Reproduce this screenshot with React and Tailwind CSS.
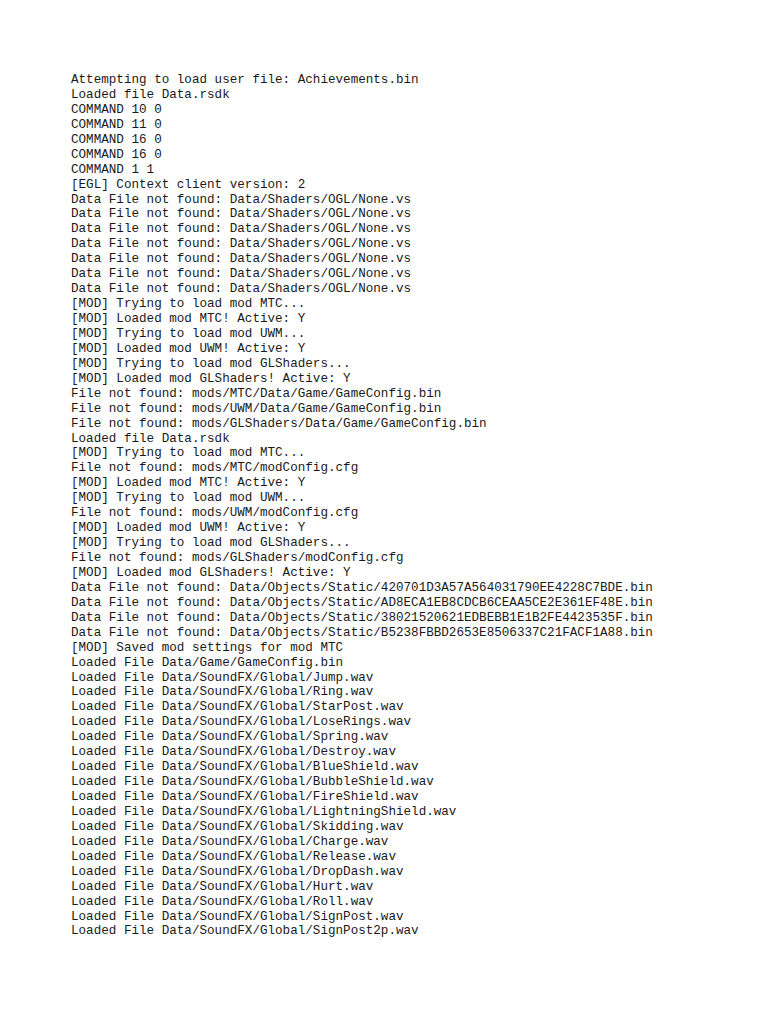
const logLines = [
  "Attempting to load user file: Achievements.bin",
  "Loaded file Data.rsdk",
  "COMMAND 10 0",
  "COMMAND 11 0",
  "COMMAND 16 0",
  "COMMAND 16 0",
  "COMMAND 1 1",
  "[EGL] Context client version: 2",
  "Data File not found: Data/Shaders/OGL/None.vs",
  "Data File not found: Data/Shaders/OGL/None.vs",
  "Data File not found: Data/Shaders/OGL/None.vs",
  "Data File not found: Data/Shaders/OGL/None.vs",
  "Data File not found: Data/Shaders/OGL/None.vs",
  "Data File not found: Data/Shaders/OGL/None.vs",
  "Data File not found: Data/Shaders/OGL/None.vs",
  "[MOD] Trying to load mod MTC...",
  "[MOD] Loaded mod MTC! Active: Y",
  "[MOD] Trying to load mod UWM...",
  "[MOD] Loaded mod UWM! Active: Y",
  "[MOD] Trying to load mod GLShaders...",
  "[MOD] Loaded mod GLShaders! Active: Y",
  "File not found: mods/MTC/Data/Game/GameConfig.bin",
  "File not found: mods/UWM/Data/Game/GameConfig.bin",
  "File not found: mods/GLShaders/Data/Game/GameConfig.bin",
  "Loaded file Data.rsdk",
  "[MOD] Trying to load mod MTC...",
  "File not found: mods/MTC/modConfig.cfg",
  "[MOD] Loaded mod MTC! Active: Y",
  "[MOD] Trying to load mod UWM...",
  "File not found: mods/UWM/modConfig.cfg",
  "[MOD] Loaded mod UWM! Active: Y",
  "[MOD] Trying to load mod GLShaders...",
  "File not found: mods/GLShaders/modConfig.cfg",
  "[MOD] Loaded mod GLShaders! Active: Y",
  "Data File not found: Data/Objects/Static/420701D3A57A564031790EE4228C7BDE.bin",
  "Data File not found: Data/Objects/Static/AD8ECA1EB8CDCB6CEAA5CE2E361EF48E.bin",
  "Data File not found: Data/Objects/Static/38021520621EDBEBB1E1B2FE4423535F.bin",
  "Data File not found: Data/Objects/Static/B5238FBBD2653E8506337C21FACF1A88.bin",
  "[MOD] Saved mod settings for mod MTC",
  "Loaded File Data/Game/GameConfig.bin",
];

const sounds = [
  "Jump", "Ring", "StarPost", "LoseRings", "Spring", "Destroy",
  "BlueShield", "BubbleShield", "FireShield", "LightningShield",
  "Skidding", "Charge", "Release", "DropDash", "Hurt", "Roll",
  "SignPost", "SignPost2p",
];

const App = () => {
  const allLines = [
    ...logLines,
    ...sounds.map((name) => `Loaded File Data/SoundFX/Global/${name}.wav`),
  ];

  return (
    <div className="bg-white min-h-screen w-full pt-[73px] pl-[71px]">
      <div className="font-['Liberation_Mono',monospace] text-[12.6px] leading-[14.93px] text-[#1a1a1a] whitespace-pre">
        {allLines.map((line, i) => (
          <div key={i}>{line}</div>
        ))}
      </div>
    </div>
  );
};

export default App;
